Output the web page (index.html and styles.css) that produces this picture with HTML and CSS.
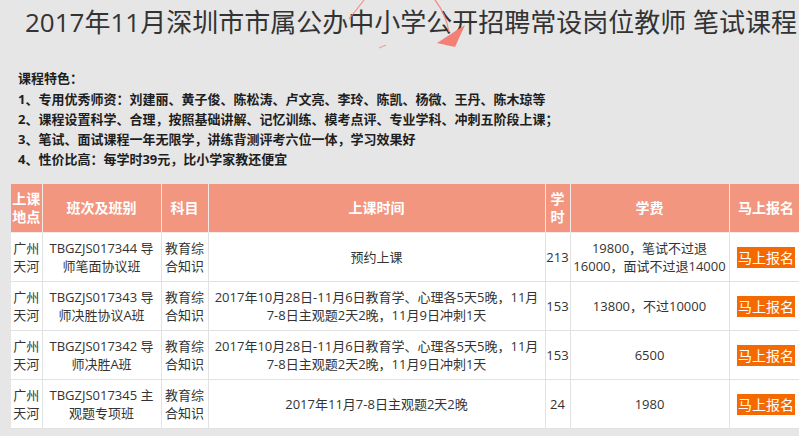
FILE: index.html
```html
<!DOCTYPE html>
<html lang="zh-CN">
<head>
<meta charset="utf-8">
<title>2017年11月深圳市市属公办中小学公开招聘常设岗位教师 笔试课程</title>
<link rel="stylesheet" href="styles.css">
</head>
<body>
<div class="page">
  <h1 class="title">2017年11月深圳市市属公办中小学公开招聘常设岗位教师 笔试课程</h1>
  <div class="features">
    <p class="feat-head">课程特色：</p>
    <p>1、专用优秀师资：刘建丽、黄子俊、陈松涛、卢文亮、李玲、陈凯、杨微、王丹、陈木琼等</p>
    <p>2、课程设置科学、合理，按照基础讲解、记忆训练、模考点评、专业学科、冲刺五阶段上课；</p>
    <p>3、笔试、面试课程一年无限学，讲练背测评考六位一体，学习效果好</p>
    <p>4、性价比高：每学时39元，比小学家教还便宜</p>
  </div>
  <table class="courses">
    <colgroup>
      <col class="c-place"><col class="c-class"><col class="c-subject"><col class="c-time"><col class="c-hours"><col class="c-fee"><col class="c-sign">
    </colgroup>
    <thead>
      <tr>
        <th>上课<br>地点</th>
        <th>班次及班别</th>
        <th>科目</th>
        <th>上课时间</th>
        <th>学<br>时</th>
        <th>学费</th>
        <th>马上报名</th>
      </tr>
    </thead>
    <tbody>
      <tr>
        <td>广州<br>天河</td>
        <td>TBGZJS017344 导<br>师笔面协议班</td>
        <td>教育综<br>合知识</td>
        <td>预约上课</td>
        <td>213</td>
        <td>19800，笔试不过退<br>16000，面试不过退14000</td>
        <td><a class="btn" href="#">马上报名</a></td>
      </tr>
      <tr>
        <td>广州<br>天河</td>
        <td>TBGZJS017343 导<br>师决胜协议A班</td>
        <td>教育综<br>合知识</td>
        <td>2017年10月28日-11月6日教育学、心理各5天5晚，11月<br>7-8日主观题2天2晚，11月9日冲刺1天</td>
        <td>153</td>
        <td>13800，不过10000</td>
        <td><a class="btn" href="#">马上报名</a></td>
      </tr>
      <tr>
        <td>广州<br>天河</td>
        <td>TBGZJS017342 导<br>师决胜A班</td>
        <td>教育综<br>合知识</td>
        <td>2017年10月28日-11月6日教育学、心理各5天5晚，11月<br>7-8日主观题2天2晚，11月9日冲刺1天</td>
        <td>153</td>
        <td>6500</td>
        <td><a class="btn" href="#">马上报名</a></td>
      </tr>
      <tr>
        <td>广州<br>天河</td>
        <td>TBGZJS017345 主<br>观题专项班</td>
        <td>教育综<br>合知识</td>
        <td>2017年11月7-8日主观题2天2晚</td>
        <td>24</td>
        <td>1980</td>
        <td><a class="btn" href="#">马上报名</a></td>
      </tr>
    </tbody>
  </table>
  <svg class="scribble" width="120" height="50" viewBox="340 0 120 50" aria-hidden="true">
    <path d="M364 0 Q358 8 349 19" fill="none" stroke="#f47f7a" stroke-width="1.2" opacity="0.8"/>
    <path d="M379 48 L386 45" fill="none" stroke="#f47f7a" stroke-width="1.2" opacity="0.7"/>
  </svg>
  <svg class="scribble2" width="60" height="50" viewBox="420 0 60 50" aria-hidden="true">
    <path d="M435 0 Q446 14 449 32" fill="none" stroke="#f47f7a" stroke-width="1.3" opacity="0.85"/>
    <polygon points="437,43 465,25 455,47" fill="#f47f76"/>
  </svg>
</div>
</body>
</html>
```

FILE: styles.css
```css
html, body {
  margin: 0;
  padding: 0;
  overflow: hidden;
  background: #e6e6e6;
}

body {
  font-family: "Open Sans", "Noto Sans CJK SC", sans-serif;
  color: #333;
}

.page {
  position: relative;
  width: 799px;
  height: 436px;
  overflow: hidden;
}

.title {
  margin: 0;
  padding: 4px 0 0 25px;
  font-size: 26px;
  line-height: 36px;
  font-weight: 400;
  color: #333;
  white-space: nowrap;
}

.features {
  margin-top: 28px;
  padding-left: 18px;
}

.features p {
  margin: 0;
  font-size: 13px;
  line-height: 20px;
  font-weight: 700;
  color: #1e1e1e;
  white-space: nowrap;
}

.features .feat-head {
  margin-bottom: 1px;
}

.courses {
  margin: 15px 0 0 11px;
  border-collapse: collapse;
  table-layout: fixed;
  width: 792px;
  background: #fff;
}

.c-place { width: 31px; }
.c-class { width: 119px; }
.c-subject { width: 47px; }
.c-time { width: 337px; }
.c-hours { width: 25px; }
.c-fee { width: 159px; }
.c-sign { width: 74px; }

.courses th,
.courses td {
  border: 1px solid #e2e2e2;
  padding: 0;
  text-align: center;
  vertical-align: middle;
  white-space: nowrap;
  overflow: visible;
}

.courses thead tr {
  height: 48px;
}

.courses th {
  background: #f29680;
  color: #fff;
  font-size: 14px;
  line-height: 18px;
  font-weight: 700;
  border-color: #f3e9e6;
  border-top: none;
}

.courses th:first-child,
.courses td:first-child {
  border-left: none;
}

.courses tbody tr {
  height: 49px;
}

.courses td {
  font-size: 13px;
  line-height: 18px;
  color: #333;
}

.btn {
  display: inline-block;
  background: #f56a00;
  color: #fff;
  text-decoration: none;
  font-size: 14px;
  line-height: 21px;
  padding: 0 1px;
  margin-top: 2px;
}

.scribble {
  position: absolute;
  left: 340px;
  top: 0;
  pointer-events: none;
}

.scribble2 {
  position: absolute;
  left: 420px;
  top: 0;
  pointer-events: none;
}
```
